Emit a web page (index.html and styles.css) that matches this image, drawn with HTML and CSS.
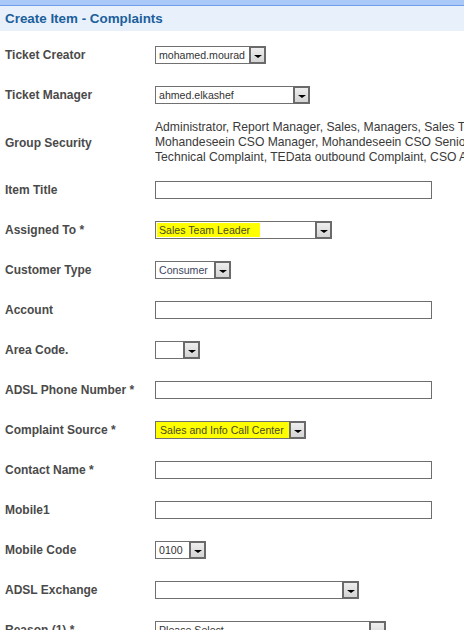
FILE: index.html
```html
<!DOCTYPE html>
<html>
<head>
<meta charset="utf-8">
<link rel="stylesheet" href="styles.css">
</head>
<body>
<div class="topbar"></div>
<div class="header"><h1 class="title">Create Item - Complaints</h1></div>
<div class="form">
  <div class="row">
    <div class="label">Ticket Creator</div>
    <div class="field"><span class="sel w-creator"><span class="val">mohamed.mourad</span><span class="btn"></span></span></div>
  </div>
  <div class="row">
    <div class="label">Ticket Manager</div>
    <div class="field"><span class="sel w-manager"><span class="val">ahmed.elkashef</span><span class="btn"></span></span></div>
  </div>
  <div class="row row-tall">
    <div class="label">Group Security</div>
    <div class="field group-text">
      <div>Administrator, Report Manager, Sales, Managers, Sales Team Leader, Sales Agents</div>
      <div>Mohandeseein CSO Manager, Mohandeseein CSO Senior, Mohandeseein CSO</div>
      <div>Technical Complaint, TEData outbound Complaint, CSO Agents</div>
    </div>
  </div>
  <div class="row">
    <div class="label">Item Title</div>
    <div class="field"><span class="input"></span></div>
  </div>
  <div class="row">
    <div class="label">Assigned To *</div>
    <div class="field"><span class="sel w-assigned"><span class="val"><span class="hl hl-assigned">Sales Team Leader</span></span><span class="btn"></span></span></div>
  </div>
  <div class="row">
    <div class="label">Customer Type</div>
    <div class="field"><span class="sel w-ctype"><span class="val val-blue">Consumer</span><span class="btn"></span></span></div>
  </div>
  <div class="row">
    <div class="label">Account</div>
    <div class="field"><span class="input"></span></div>
  </div>
  <div class="row">
    <div class="label">Area Code.</div>
    <div class="field"><span class="sel w-area"><span class="val"></span><span class="btn"></span></span></div>
  </div>
  <div class="row">
    <div class="label">ADSL Phone Number *</div>
    <div class="field"><span class="input"></span></div>
  </div>
  <div class="row">
    <div class="label">Complaint Source *</div>
    <div class="field"><span class="sel w-source"><span class="val val-hl">Sales and Info Call Center</span><span class="btn"></span></span></div>
  </div>
  <div class="row">
    <div class="label">Contact Name *</div>
    <div class="field"><span class="input"></span></div>
  </div>
  <div class="row">
    <div class="label">Mobile1</div>
    <div class="field"><span class="input"></span></div>
  </div>
  <div class="row">
    <div class="label">Mobile Code</div>
    <div class="field"><span class="sel w-mcode"><span class="val">0100</span><span class="btn"></span></span></div>
  </div>
  <div class="row">
    <div class="label">ADSL Exchange</div>
    <div class="field"><span class="sel w-exchange"><span class="val"></span><span class="btn"></span></span></div>
  </div>
  <div class="row">
    <div class="label">Reason (1) *</div>
    <div class="field"><span class="sel w-reason"><span class="val">Please Select</span><span class="btn"></span></span></div>
  </div>
</div>
</body>
</html>
```
FILE: styles.css
```css
html, body {
  margin: 0;
  padding: 0;
  background: #ffffff;
  overflow: hidden;
}
body {
  font-family: "Liberation Sans", Arial, sans-serif;
  width: 464px;
  height: 630px;
}
.topbar {
  height: 5px;
  background: #abc9f8;
  border-bottom: 1px solid #6c9ee9;
}
.header {
  height: 25px;
  background: #e8f0fc;
  display: flex;
  align-items: center;
  padding-left: 5px;
}
.title {
  margin: 0;
  font-size: 13.4px;
  font-weight: bold;
  color: #1b5f9b;
  line-height: 16px;
}
.form {
  padding-top: 4px;
}
.row {
  display: grid;
  grid-template-columns: 150px 1fr;
  align-items: center;
  height: 40px;
  padding-left: 5px;
  white-space: nowrap;
}
.row-tall {
  height: 55px;
}
.label {
  font-size: 12px;
  font-weight: bold;
  color: #4a4a4a;
}
.field {
  display: flex;
  align-items: center;
  min-width: 0;
}
.group-text {
  display: block;
  font-size: 12.15px;
  line-height: 15px;
  color: #3a3a3a;
  overflow: hidden;
}
.input {
  display: block;
  width: 277px;
  height: 18px;
  box-sizing: border-box;
  border: 1px solid #6e6e6e;
  background: #fff;
}
.sel {
  display: inline-flex;
  height: 18px;
  box-sizing: border-box;
}
.val {
  flex: 1;
  min-width: 0;
  box-sizing: border-box;
  border: 1px solid #707070;
  border-right: none;
  background: #fff;
  font-size: 10.6px;
  line-height: 16px;
  color: #333;
  padding: 0 3px;
  overflow: hidden;
}
.val-blue {
  color: #3d4660;
}
.val-hl {
  background: #ffff00;
  color: #4a4a20;
  padding-left: 4px;
}
.hl {
  display: inline-block;
  background: #ffff00;
  color: #4a4a20;
  line-height: 14px;
  padding: 0 3px 0 2px;
  margin-left: -2px;
}
.hl-assigned {
  width: 98px;
}
.btn {
  width: 17px;
  flex: none;
  box-sizing: border-box;
  border: 2px solid #6a6a6a;
  background: linear-gradient(#eeeeee, #d4d4d4);
  display: flex;
  align-items: center;
  justify-content: center;
}
.btn::after {
  content: "";
  width: 0;
  height: 0;
  border-left: 4px solid transparent;
  border-right: 4px solid transparent;
  border-top: 3px solid #000;
  margin-top: 3px;
}
.w-creator { width: 111px; }
.w-manager { width: 155px; }
.w-assigned { width: 177px; }
.w-ctype { width: 76px; }
.w-area { width: 45px; }
.w-source { width: 151px; }
.w-mcode { width: 51px; }
.w-exchange { width: 204px; }
.w-reason { width: 231px; }
```
